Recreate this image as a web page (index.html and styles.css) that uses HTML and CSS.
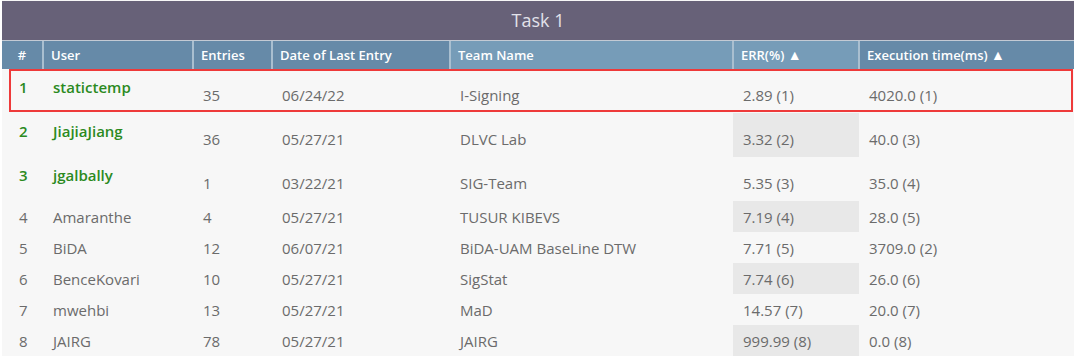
FILE: index.html
```html
<!DOCTYPE html>
<html>
<head>
<meta charset="utf-8">
<link rel="stylesheet" href="styles.css">
</head>
<body>
<div class="board">
  <div class="title">Task 1</div>
  <table class="rank">
    <colgroup>
      <col class="c-num"><col class="c-user"><col class="c-ent"><col class="c-date"><col class="c-team"><col class="c-err"><col class="c-exec">
    </colgroup>
    <thead>
      <tr>
        <th class="h-num">#</th>
        <th>User</th>
        <th>Entries</th>
        <th>Date of Last Entry</th>
        <th class="h-light">Team Name</th>
        <th class="h-light">ERR(%) <span class="arrow">▲</span></th>
        <th>Execution time(ms) <span class="arrow">▲</span></th>
      </tr>
    </thead>
    <tbody>
      <tr class="top"><td class="num">1</td><td class="user">statictemp</td><td>35</td><td>06/24/22</td><td>I-Signing</td><td class="err">2.89 (1)</td><td>4020.0 (1)</td></tr>
      <tr class="top"><td class="num">2</td><td class="user">JiajiaJiang</td><td>36</td><td>05/27/21</td><td>DLVC Lab</td><td class="err">3.32 (2)</td><td>40.0 (3)</td></tr>
      <tr class="top"><td class="num">3</td><td class="user">jgalbally</td><td>1</td><td>03/22/21</td><td>SIG-Team</td><td class="err">5.35 (3)</td><td>35.0 (4)</td></tr>
      <tr><td class="num">4</td><td class="user">Amaranthe</td><td>4</td><td>05/27/21</td><td>TUSUR KIBEVS</td><td class="err">7.19 (4)</td><td>28.0 (5)</td></tr>
      <tr><td class="num">5</td><td class="user">BiDA</td><td>12</td><td>06/07/21</td><td>BiDA-UAM BaseLine DTW</td><td class="err">7.71 (5)</td><td>3709.0 (2)</td></tr>
      <tr><td class="num">6</td><td class="user">BenceKovari</td><td>10</td><td>05/27/21</td><td>SigStat</td><td class="err">7.74 (6)</td><td>26.0 (6)</td></tr>
      <tr><td class="num">7</td><td class="user">mwehbi</td><td>13</td><td>05/27/21</td><td>MaD</td><td class="err">14.57 (7)</td><td>20.0 (7)</td></tr>
      <tr><td class="num">8</td><td class="user">JAIRG</td><td>78</td><td>05/27/21</td><td>JAIRG</td><td class="err">999.99 (8)</td><td>0.0 (8)</td></tr>
    </tbody>
  </table>
  <div class="highlight"></div>
</div>
</body>
</html>
```

FILE: styles.css
```css
html, body {
  margin: 0;
  padding: 0;
  background: #ffffff;
}
body {
  font-family: "Open Sans", "Noto Sans", sans-serif;
  color: #6b6b6b;
}
.board {
  position: relative;
  width: 1072px;
  margin-left: 2px;
  padding-top: 1px;
  background: #f7f7f7;
}
.title {
  height: 39px;
  line-height: 39px;
  background: #676178;
  color: #e2e2ea;
  text-align: center;
  font-size: 18px;
  border-bottom: 1px solid #c3cad4;
}
.rank {
  width: 1072px;
  border-collapse: collapse;
  table-layout: fixed;
  font-size: 15px;
  line-height: 20px;
}
.c-num { width: 41px; }
.c-user { width: 150px; }
.c-ent { width: 79px; }
.c-date { width: 178px; }
.c-team { width: 283px; }
.c-err { width: 126px; }
.c-exec { width: 215px; }
.rank thead tr { height: 28px; }
.rank th {
  padding: 0 0 0 7px;
  background: #668aa8;
  color: #ffffff;
  font-size: 13px;
  font-weight: 600;
  text-align: left;
  border-left: 2px solid #a9bfd0;
}
.rank th:first-child { border-left: none; }
.rank th.h-num { text-align: center; padding: 0; }
.rank th.h-light { background: #769cb8; }
.arrow { font-size: 14px; }
.rank tbody tr { height: 31px; }
.rank tbody tr.top { height: 44px; }
.rank td {
  padding: 0 0 0 10px;
  vertical-align: middle;
  white-space: nowrap;
}
.rank td.num { padding-left: 17px; }
.rank tr.top td { padding-top: 8px; }
.rank tr.top td.num,
.rank tr.top td.user {
  padding-top: 0;
  padding-bottom: 8px;
  color: #2b8a1e;
  font-weight: 600;
}
.rank tbody tr:nth-child(even) td.err { background: #e8e8e8; }
.highlight {
  position: absolute;
  left: 7px;
  top: 69px;
  width: 1060px;
  height: 39px;
  border: 2px solid #ee3a3a;
}
```
